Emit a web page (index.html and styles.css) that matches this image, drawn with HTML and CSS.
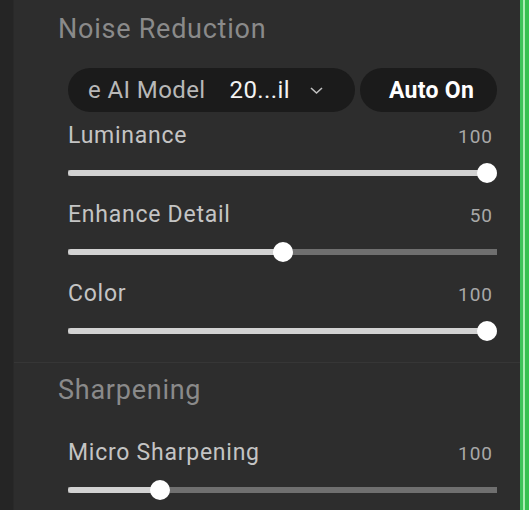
FILE: index.html
```html
<!DOCTYPE html>
<html lang="en">
<head>
  <meta charset="UTF-8" />
  <title>Noise Reduction</title>
  <link rel="stylesheet" href="styles.css">
</head>
<body>
  <div class="rail"></div>

  <div class="panel">
    <section class="group noise">
      <h2>Noise Reduction</h2>

      <div class="model-row">
        <div class="pill model">
          <span class="model-name">e AI Model</span>
          <span class="model-value">20...il</span>
          <svg class="chev" width="15" height="9" viewBox="0 0 15 9">
            <path d="M2 2 L7.5 7 L13 2" fill="none" stroke="#c0c0c0" stroke-width="1.6"/>
          </svg>
        </div>
        <div class="pill auto">Auto On</div>
      </div>

      <div class="control">
        <div class="label-row"><span>Luminance</span><span class="val">100</span></div>
        <div class="slider" style="--v: 1"><div class="fill"></div><div class="thumb"></div></div>
      </div>
      <div class="control">
        <div class="label-row"><span>Enhance Detail</span><span class="val">50</span></div>
        <div class="slider" style="--v: 0.5"><div class="fill"></div><div class="thumb"></div></div>
      </div>
      <div class="control last">
        <div class="label-row"><span>Color</span><span class="val">100</span></div>
        <div class="slider" style="--v: 1"><div class="fill"></div><div class="thumb"></div></div>
      </div>
    </section>

    <section class="group sharp">
      <h2>Sharpening</h2>
      <div class="control">
        <div class="label-row"><span>Micro Sharpening</span><span class="val">100</span></div>
        <div class="slider" style="--v: 0.2"><div class="fill"></div><div class="thumb"></div></div>
      </div>
    </section>
  </div>

  <div class="edge"></div>
</body>
</html>
```

FILE: styles.css
```css
body {
  margin: 0;
  height: 510px;
  overflow: hidden;
  display: flex;
  background-color: #2d2d2d;
  font-family: Roboto, 'Noto Sans', sans-serif;
}

.rail {
  width: 13px;
  background-color: #252525;
  border-right: 1px solid #292929;
}

.panel {
  flex: 1;
  background-color: #2d2d2d;
}

.edge {
  width: 9px;
  background: linear-gradient(to right, #3ec45a 0, #3ec45a 3px, #a8eeb2 3px, #a8eeb2 5px, #36c150 5px);
}

.group {
  padding: 14px 23px 0 44px;
}

.group.noise {
  border-bottom: 1px solid #363636;
  padding-bottom: 21px;
}

.group.sharp {
  padding-top: 12px;
}

h2 {
  margin: 0;
  font-size: 27px;
  line-height: 30px;
  font-weight: 400;
  letter-spacing: 0.75px;
  color: #8a8a8a;
}

.noise h2 {
  margin-bottom: 24px;
}

.sharp h2 {
  margin-bottom: 35px;
}

.model-row {
  display: flex;
  gap: 5px;
  margin-left: 10px;
  margin-bottom: 11px;
}

.pill {
  height: 44px;
  border-radius: 22px;
  background-color: #1b1b1b;
  display: flex;
  align-items: center;
  font-size: 24px;
  letter-spacing: 0.4px;
}

.model {
  width: 287px;
  padding-left: 20px;
  box-sizing: border-box;
}

.model-name {
  color: #b8b8b8;
}

.model-value {
  color: #f2f2f2;
  margin-left: 24px;
}

.chev {
  margin-left: 19px;
}

.auto {
  flex: 1;
  justify-content: center;
  color: #ffffff;
  font-weight: 700;
  font-size: 23px;
  letter-spacing: 0.3px;
  padding-left: 6px;
}

.control {
  margin-left: 10px;
  margin-bottom: 19px;
}

.control.last {
  margin-bottom: 0;
}

.label-row {
  display: flex;
  justify-content: space-between;
  align-items: baseline;
  height: 26px;
  line-height: 26px;
  font-size: 23px;
  letter-spacing: 0.75px;
  color: #c4c4c4;
  margin-bottom: 14px;
}

.val {
  font-size: 19px;
  letter-spacing: 1px;
  color: #a8a8a8;
  margin-right: 4px;
}

.slider {
  position: relative;
  height: 20px;
  background: linear-gradient(#6f6f6f, #6f6f6f) no-repeat 0 center / 100% 6px;
  border-radius: 3px;
}

.fill {
  position: absolute;
  left: 0;
  top: 7px;
  height: 6px;
  width: calc(10px + var(--v) * (100% - 20px));
  border-radius: 3px;
  background-color: #d2d2d2;
}

.thumb {
  position: absolute;
  top: 0;
  left: calc(var(--v) * (100% - 20px));
  width: 20px;
  height: 20px;
  border-radius: 50%;
  background-color: #ffffff;
}
```
